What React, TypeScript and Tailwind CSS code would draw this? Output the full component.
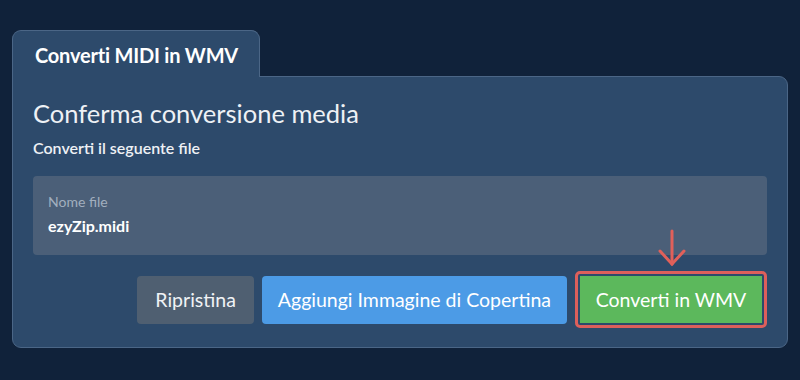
export default function App() {
  return (
    <div
      className="w-[800px] h-[380px] bg-[#10223a] pt-[30px] px-[12px]"
      style={{ fontFamily: "Lato, 'Noto Sans', sans-serif" }}
    >
      <div className="flex flex-col w-[776px]">
        <div className="relative z-10 w-[248px] h-[47px] -mb-px bg-[#2d4a6b] border border-b-0 border-[#4b6686] rounded-t-[9px] pl-[22px] pt-[12px]">
          <span className="text-[20px] leading-[24px] font-bold text-white tracking-[-0.2px]">Converti MIDI in WMV</span>
        </div>
        <div className="h-[272px] bg-[#2d4a6b] border border-[#4b6686] rounded-b-[9px] rounded-tr-[9px] px-[20px] pt-[20px]">
          <h1 className="text-[25.5px] leading-[32px] text-[#eef1f5]">Conferma conversione media</h1>
          <p className="mt-[8px] text-[16px] leading-[22px] font-semibold text-[#eef1f5]">Converti il seguente file</p>
          <div className="mt-[17px] h-[79px] bg-[#4b5f78] rounded-[4px] px-[15px] pt-[18px]">
            <div className="text-[14px] leading-[16px] text-[#a2afbf]">Nome file</div>
            <div className="mt-[6px] text-[16px] leading-[20px] font-bold text-white">ezyZip.midi</div>
          </div>
          <div className="relative flex justify-end items-center gap-[8px] mt-[16px]">
            <button className="h-[48px] px-[18px] bg-[#4f5f71] rounded-[4px] text-[19.5px] text-[#f0f2f5]">Ripristina</button>
            <button className="h-[48px] px-[16px] bg-[#4c9be6] rounded-[4px] text-[19.5px] text-white">Aggiungi Immagine di Copertina</button>
            <div className="p-[2px] rounded-[5px] border-[3px] border-[#dd5f5b]">
              <button className="h-[47px] w-[182px] bg-[#5cb85c] text-[19.5px] text-white">Converti in WMV</button>
            </div>
            <svg
              className="absolute right-[80px] -top-[42px]"
              width="30"
              height="38"
              viewBox="0 0 30 38"
              fill="none"
              stroke="#e0605a"
              strokeWidth="3"
              strokeLinecap="round"
            >
              <path d="M15 2 V35" />
              <path d="M3 22 L15 35 L27 22" />
            </svg>
          </div>
        </div>
      </div>
    </div>
  );
}
